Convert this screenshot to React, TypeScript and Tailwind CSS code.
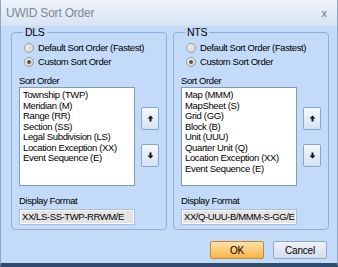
const font = "font-['Liberation_Sans',Arial,sans-serif]";

const Radio = ({ checked, label }: { checked?: boolean; label: string }) => (
	<div className="flex items-center h-[14px]">
		<span className="w-[10px] h-[10px] rounded-full border border-[#9a9a9a] bg-gradient-to-br from-[#f4f4f4] to-[#d2d2d2] flex items-center justify-center">
			{checked && <span className="w-[4px] h-[4px] rounded-full bg-[#555]" />}
		</span>
		<span className="ml-[4px] text-[9.5px] tracking-[-0.4px] leading-none text-black whitespace-nowrap">{label}</span>
	</div>
);

const ArrowButton = ({ up }: { up?: boolean }) => (
	<div className="w-[18px] h-[23px] rounded-[2px] border border-[#8aa6cf] bg-gradient-to-b from-[#f5f8fc] to-[#d4e2f4] flex items-center justify-center">
		<svg width="7" height="7" viewBox="0 0 7 7">
			{up ? (
				<path d="M3.5 0.5 L6.5 3.5 L4.5 3.5 L4.5 6.5 L2.5 6.5 L2.5 3.5 L0.5 3.5 Z" fill="#111" />
			) : (
				<path d="M3.5 6.5 L6.5 3.5 L4.5 3.5 L4.5 0.5 L2.5 0.5 L2.5 3.5 L0.5 3.5 Z" fill="#111" />
			)}
		</svg>
	</div>
);

type GroupProps = {
	title: string;
	items: string[];
	format: string;
};

const Group = ({ title, items, format }: GroupProps) => (
	<fieldset className="w-[156px] h-[203px] border border-[#8eaedb] rounded-[4px] px-[7px] pb-0">
		<legend className="ml-[4px] px-[2px] text-[10.5px] tracking-[-0.3px] leading-none text-black">{title}</legend>
		<div className="flex flex-col pl-[5px] mt-[3px]">
			<Radio label="Default Sort Order (Fastest)" />
			<Radio checked label="Custom Sort Order" />
		</div>
		<div className="mt-[7px] text-[9.5px] tracking-[-0.4px] leading-none text-black">Sort Order</div>
		<div className="flex mt-[2px]">
			<div className="w-[116px] h-[99px] bg-white border border-[#7f9db9] pl-[3px] pt-[2px]">
				{items.map((item) => (
					<div key={item} className="text-[9.5px] tracking-[-0.35px] leading-[10.5px] text-black whitespace-nowrap">
						{item}
					</div>
				))}
			</div>
			<div className="flex flex-col ml-[6px] mt-[20px] gap-[14px]">
				<ArrowButton up />
				<ArrowButton />
			</div>
		</div>
		<div className="mt-[10px] text-[9.5px] tracking-[-0.4px] leading-none text-black">Display Format</div>
		<div className="mt-[3px] w-[116px] h-[16px] border border-[#a9bfdc] bg-white p-[1px]">
			<div className="h-full bg-[#e4e4e4] text-[9.5px] tracking-[-0.4px] leading-[12px] text-black pl-[1px] whitespace-nowrap overflow-hidden">
				{format}
			</div>
		</div>
	</fieldset>
);

export default function App() {
	return (
		<div className={`${font} w-[338px] h-[267px] bg-[#c3daf8] flex flex-col border-x border-[#8ea6c4] border-b-[4px] border-b-[#2f4a6c]`}>
			<div className="h-[26px] bg-gradient-to-b from-[#eef3fa] to-[#d8e4f4] flex items-center justify-between pl-[5px] pr-[10px]">
				<span className="text-[12px] tracking-[-0.2px] text-[#7c8899]">UWID Sort Order</span>
				<span className="text-[11px] text-[#6c7888]">x</span>
			</div>
			<div className="flex gap-[6px] pl-[10px] mt-[1px]">
				<Group
					title="DLS"
					items={[
						"Township (TWP)",
						"Meridian (M)",
						"Range (RR)",
						"Section (SS)",
						"Legal Subdivision (LS)",
						"Location Exception (XX)",
						"Event Sequence (E)",
					]}
					format="XX/LS-SS-TWP-RRWM/E"
				/>
				<Group
					title="NTS"
					items={[
						"Map (MMM)",
						"MapSheet (S)",
						"Grid (GG)",
						"Block (B)",
						"Unit (UUU)",
						"Quarter Unit (Q)",
						"Location Exception (XX)",
						"Event Sequence (E)",
					]}
					format="XX/Q-UUU-B/MMM-S-GG/E"
				/>
			</div>
			<div className="flex justify-end gap-[9px] pr-[10px] mt-[11px]">
				<button className="w-[54px] h-[18px] rounded-[2px] border border-[#c08a35] bg-gradient-to-b from-[#fde2a6] to-[#f8b443] text-[10px] tracking-[-0.2px] text-black">
					OK
				</button>
				<button className="w-[54px] h-[18px] rounded-[2px] border border-[#8ea6c8] bg-gradient-to-b from-[#f1f4f9] to-[#d3dceb] text-[10px] tracking-[-0.2px] text-black">
					Cancel
				</button>
			</div>
		</div>
	);
}
